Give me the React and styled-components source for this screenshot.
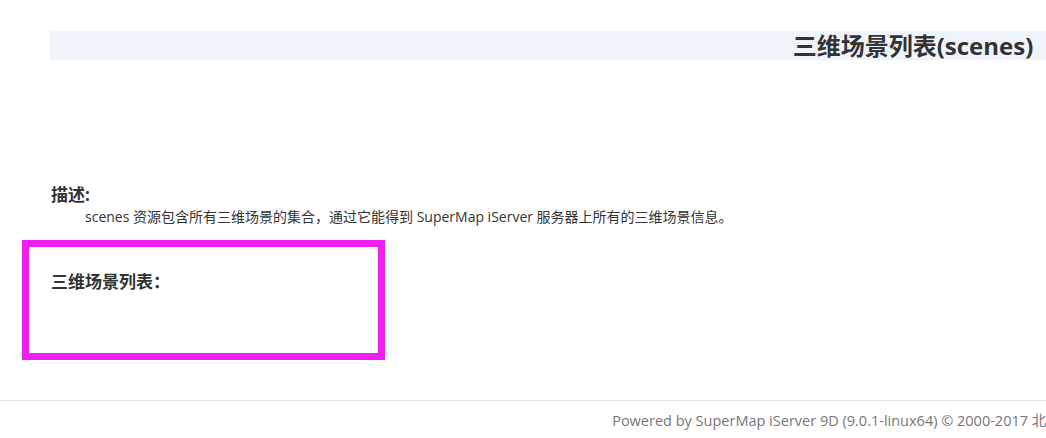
import styled, { createGlobalStyle } from "styled-components";

const GlobalStyle = createGlobalStyle`
  html, body {
    margin: 0;
    padding: 0;
    background: #fff;
    overflow: hidden;
  }
  body {
    font-family: "Open Sans", "Noto Sans CJK SC", sans-serif;
    color: #333;
  }
`

const App = () => {
  return (
    <Page>
      <GlobalStyle />
      <Header>
        <Title>三维场景列表(scenes)</Title>
      </Header>
      <Section>
        <Label>描述:</Label>
        <Desc>
          scenes 资源包含所有三维场景的集合，通过它能得到 SuperMap iServer 服务器上所有的三维场景信息。
        </Desc>
      </Section>
      <Highlight>
        <Label>三维场景列表：</Label>
      </Highlight>
      <Footer>
        Powered by SuperMap iServer 9D (9.0.1-linux64) © 2000-2017 北京超图软件股份有限公司
      </Footer>
    </Page>
  )
}

export default App;

const Page = styled.div`
  width: 1826px;
  padding-top: 31px;
`
const Header = styled.div`
  margin: 0 50px;
  height: 29px;
  background-color: #eff4fb;
  display: flex;
  align-items: center;
  justify-content: center;
`
const Title = styled.h1`
  margin: 0;
  font-size: 24px;
  font-weight: bold;
  color: #333;
  line-height: 29px;
`
const Section = styled.div`
  margin-top: 124px;
  padding-left: 51px;
`
const Label = styled.div`
  font-size: 17px;
  font-weight: bold;
  color: #333;
  line-height: 22px;
`
const Desc = styled.p`
  margin: 0;
  padding-left: 34px;
  font-size: 14px;
  line-height: 21px;
  color: #333;
`
const Highlight = styled.div`
  margin: 13px 0 0 22px;
  border: 7px solid #f01ef0;
  padding: 24px 0 0 22px;
  box-sizing: border-box;
  width: 363px;
  height: 120px;
`
const Footer = styled.div`
  margin-top: 40px;
  border-top: 1px solid #e5e5e5;
  padding: 10px 8px 0 0;
  text-align: center;
  font-size: 14.5px;
  line-height: 20px;
  color: #777;
  white-space: nowrap;
`
